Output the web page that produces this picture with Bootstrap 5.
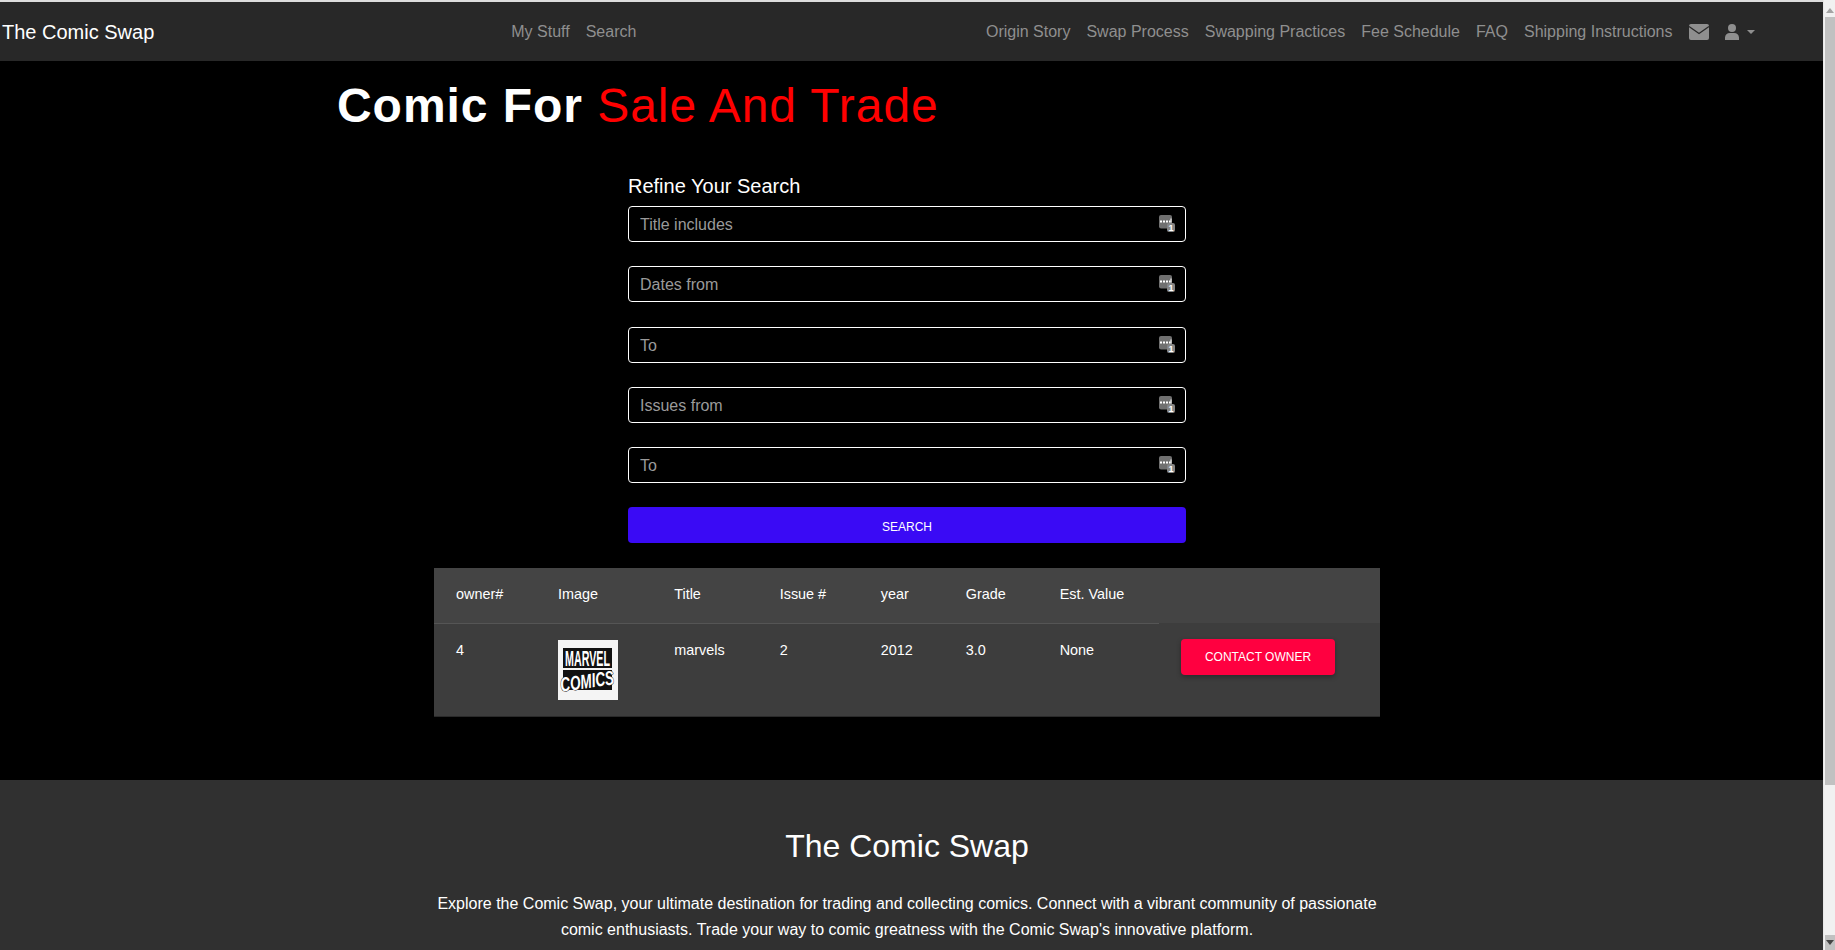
<!DOCTYPE html>
<html lang="en">
<head>
<meta charset="utf-8">
<title>The Comic Swap</title>
<link href="https://cdn.jsdelivr.net/npm/bootstrap@5.3.0/dist/css/bootstrap.min.css" rel="stylesheet">
<style>
body{background:#000;color:#fff;font-family:"Liberation Sans",Arial,sans-serif;border-top:2px solid #ddd;padding-right:12px}
.topbar{background:#282828;height:59px;padding:0 0 0 2px}
.topbar .navbar-brand{color:#fff;font-size:20px;padding:0;margin:0}
.topbar .nav-link{color:#8f8f8f;font-size:16px;padding:0 8px}
.mid-links{margin-left:349px}
.right-links{margin-left:auto;margin-right:60.500px}
.headline{font-size:48px;font-weight:700;letter-spacing:.95px;margin:0 0 0 337px;padding-top:16px;line-height:58px;color:#fff}
.headline span{color:#f00;font-weight:400}
.search-box{width:558px;margin:39px auto 0 628px}
.search-box h5{font-size:20px;font-weight:400;margin:0 0 8px;line-height:24px}
.field-row{position:relative;margin-bottom:24.250px}
.dark-input{background:#000;border:1px solid #fff;border-radius:4px;color:#fff;height:36px;padding:7px 11px 5px;font-size:16px}
.dark-input::placeholder{color:#9a9a9a}
.dark-input:focus{background:#000;color:#fff}
.pick-icon{position:absolute;right:11px;top:9px;width:16px;height:17px}
.search-btn{background:#3a0af5;color:#fff;border:0;border-radius:4px;height:36px;font-size:12px;width:100%;padding:8px 12px 4px}
.result-box{width:946px;margin:25px 0 0 434px;background:#3d3d3d;border-bottom:1px solid #2a2a2a}
.result-table{--bs-table-bg:transparent;--bs-table-color:#fff;color:#fff;margin:0;font-size:14.400px}
.result-table th{font-weight:400;padding:15px 22px 19px;border-bottom:1px solid #555;line-height:20px;height:55px;background:#444}
.result-table th.no-line{border-bottom:0;width:221px}
.result-table td{padding:16px 22px 16px;border:0;line-height:20px;height:93px}
.marvel-thumb{display:block;width:60px;height:60px;background:#f4f4f4}
.contact-btn{background:#ff0040;color:#fff;border:0;border-radius:4px;font-size:12px;height:36px;width:154px;box-shadow:0 2px 5px rgba(0,0,0,.3)}
.about-band{background:#303030;margin-top:63px;padding:47px 0 0;height:171px;overflow:hidden;text-align:center}
.about-inner{width:946px;margin-left:434px}
.about-inner h2{font-size:32px;font-weight:400;line-height:38px;margin:0 0 26px}
.about-inner p{margin:0;font-size:16px;line-height:25.600px;color:#fff}
.fake-scroll{position:fixed;top:0;right:0;bottom:0;width:12px;background:#f1f1f1;border-left:1px solid #e8e8e8}
.scroll-up{height:17px;padding:8px 0 0 2px}
.scroll-thumb{height:768px;background:#c1c1c1;margin-left:1px}
.scroll-down{height:15px;background:#c1c1c1;margin-left:1px;padding:5px 0 0 1px}
</style>
</head>
<body>
<svg class="d-none">
  <symbol id="fill-icon" viewBox="0 0 16 17">
    <rect width="13" height="13.500" rx="2" fill="#707070"/>
    <path d="M1 5.500h2v2H1zM4 5.500h2v2H4zM7 5.500h2v2H7zM10 5.500h1.500v2H10z" fill="#fff"/>
    <path d="M11.500 3.500h1v4h-1z" fill="#fff"/>
    <rect x="8" y="8" width="8" height="9" rx="2" fill="#858585"/>
    <text x="12" y="15.500" text-anchor="middle" font-family="Liberation Sans" font-size="9" font-weight="700" fill="#fff">1</text>
  </symbol>
</svg>

<nav class="navbar topbar navbar-expand">
  <div class="d-flex align-items-center w-100">
    <a class="navbar-brand" href="#">The Comic Swap</a>
    <ul class="navbar-nav mid-links">
      <li class="nav-item"><a class="nav-link" href="#">My Stuff</a></li>
      <li class="nav-item"><a class="nav-link" href="#">Search</a></li>
    </ul>
    <ul class="navbar-nav right-links align-items-center">
      <li class="nav-item"><a class="nav-link" href="#">Origin Story</a></li>
      <li class="nav-item"><a class="nav-link" href="#">Swap Process</a></li>
      <li class="nav-item"><a class="nav-link" href="#">Swapping Practices</a></li>
      <li class="nav-item"><a class="nav-link" href="#">Fee Schedule</a></li>
      <li class="nav-item"><a class="nav-link" href="#">FAQ</a></li>
      <li class="nav-item"><a class="nav-link" href="#">Shipping Instructions</a></li>
      <li class="nav-item"><a class="nav-link d-flex" href="#" aria-label="Messages"><svg width="20" height="16" viewBox="0 0 20 16"><rect width="20" height="16" rx="2" fill="#8f8f8f"/><path d="M0 2.500 10 9.500 20 2.500" fill="none" stroke="#282828" stroke-width="1.300"/></svg></a></li>
      <li class="nav-item"><a class="nav-link d-flex align-items-center" href="#" aria-label="Account"><svg width="14" height="16" viewBox="0 0 14 16"><circle cx="7" cy="4" r="4" fill="#8f8f8f"/><path d="M0 16v-2.500a5 5 0 0 1 5-4.500h4a5 5 0 0 1 5 4.500V16z" fill="#8f8f8f"/></svg><svg class="ms-2" width="8" height="4" viewBox="0 0 8 4"><path d="M0 0h8L4 4z" fill="#8f8f8f"/></svg></a></li>
    </ul>
  </div>
</nav>

<main>
  <h1 class="headline">Comic For <span>Sale And Trade</span></h1>

  <form class="search-box">
    <h5>Refine Your Search</h5>
    <div class="field-row"><input class="form-control dark-input" placeholder="Title includes"><svg class="pick-icon"><use href="#fill-icon"/></svg></div>
    <div class="field-row"><input class="form-control dark-input" placeholder="Dates from"><svg class="pick-icon"><use href="#fill-icon"/></svg></div>
    <div class="field-row"><input class="form-control dark-input" placeholder="To"><svg class="pick-icon"><use href="#fill-icon"/></svg></div>
    <div class="field-row"><input class="form-control dark-input" placeholder="Issues from"><svg class="pick-icon"><use href="#fill-icon"/></svg></div>
    <div class="field-row"><input class="form-control dark-input" placeholder="To"><svg class="pick-icon"><use href="#fill-icon"/></svg></div>
    <button type="button" class="btn search-btn">SEARCH</button>
  </form>

  <div class="result-box">
    <table class="table result-table">
      <thead><tr><th>owner#</th><th>Image</th><th>Title</th><th>Issue #</th><th>year</th><th>Grade</th><th>Est. Value</th><th class="no-line"></th></tr></thead>
      <tbody><tr>
        <td>4</td>
        <td><svg class="marvel-thumb" viewBox="0 0 60 60"><rect width="60" height="60" fill="#f4f4f4"/><rect x="5" y="8" width="49" height="20" fill="#111"/><text transform="translate(29.500 26) scale(1.070 2.200)" text-anchor="middle" font-family="Liberation Sans" font-size="10" font-weight="700" fill="#fff">MARVEL</text><rect x="5" y="30" width="49" height="20" fill="#111"/><text transform="translate(30 48) rotate(-8) scale(1.350 2)" text-anchor="middle" font-family="Liberation Sans" font-size="10" font-style="italic" font-weight="700" fill="#fff" stroke="#111" stroke-width=".5" paint-order="stroke">COMICS</text></svg></td>
        <td>marvels</td><td>2</td><td>2012</td><td>3.0</td><td>None</td>
        <td class="py-3"><button type="button" class="btn contact-btn">CONTACT OWNER</button></td>
      </tr></tbody>
    </table>
  </div>

  <section class="about-band">
    <div class="about-inner">
      <h2>The Comic Swap</h2>
      <p>Explore the Comic Swap, your ultimate destination for trading and collecting comics. Connect with a vibrant community of passionate comic enthusiasts. Trade your way to comic greatness with the Comic Swap's innovative platform.</p>
    </div>
  </section>
</main>

<div class="fake-scroll d-flex flex-column" aria-hidden="true">
  <div class="scroll-up"><svg class="d-block" width="8" height="5" viewBox="0 0 8 5"><path d="M4 0l4 5H0z" fill="#a3a3a3"/></svg></div>
  <div class="scroll-thumb"></div>
  <div class="flex-grow-1"></div>
  <div class="scroll-down"><svg class="d-block" width="8" height="5" viewBox="0 0 8 5"><path d="M0 0h8L4 5z" fill="#444"/></svg></div>
</div>
<script src="https://cdn.jsdelivr.net/npm/bootstrap@5.3.0/dist/js/bootstrap.bundle.min.js"></script>
</body>
</html>
